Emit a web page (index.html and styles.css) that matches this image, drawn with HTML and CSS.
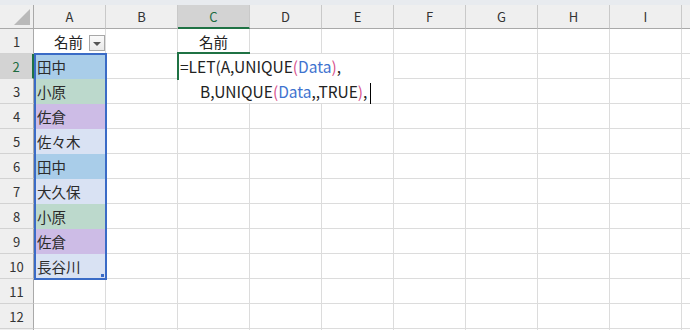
FILE: index.html
```html
<!DOCTYPE html>
<html lang="ja">
<head>
<meta charset="utf-8">
<link rel="stylesheet" href="styles.css">
</head>
<body>
<div class="sheet">
  <div class="strip"></div>
  <div class="grid">
    <div class="corner"><span class="tri"></span></div>
    <div class="ch">A</div><div class="ch">B</div><div class="ch sel">C</div><div class="ch">D</div><div class="ch">E</div><div class="ch">F</div><div class="ch">G</div><div class="ch">H</div><div class="ch">I</div><div class="ch last"></div>

    <div class="rh">1</div><div class="c hd"><span>名前</span><span class="dd"><span class="arrow"></span></span></div><div class="c"></div><div class="c ctr">名前</div><div class="c"></div><div class="c"></div><div class="c"></div><div class="c"></div><div class="c"></div><div class="c"></div><div class="c"></div>

    <div class="rh rsel">2</div><div class="c n blue">田中</div><div class="c"></div><div class="c"></div><div class="c"></div><div class="c"></div><div class="c"></div><div class="c"></div><div class="c"></div><div class="c"></div><div class="c"></div>

    <div class="rh">3</div><div class="c n green">小原</div><div class="c"></div><div class="c"></div><div class="c"></div><div class="c"></div><div class="c"></div><div class="c"></div><div class="c"></div><div class="c"></div><div class="c"></div>

    <div class="rh">4</div><div class="c n purple">佐倉</div><div class="c"></div><div class="c"></div><div class="c"></div><div class="c"></div><div class="c"></div><div class="c"></div><div class="c"></div><div class="c"></div><div class="c"></div>

    <div class="rh">5</div><div class="c n light">佐々木</div><div class="c"></div><div class="c"></div><div class="c"></div><div class="c"></div><div class="c"></div><div class="c"></div><div class="c"></div><div class="c"></div><div class="c"></div>

    <div class="rh">6</div><div class="c n blue">田中</div><div class="c"></div><div class="c"></div><div class="c"></div><div class="c"></div><div class="c"></div><div class="c"></div><div class="c"></div><div class="c"></div><div class="c"></div>

    <div class="rh">7</div><div class="c n light">大久保</div><div class="c"></div><div class="c"></div><div class="c"></div><div class="c"></div><div class="c"></div><div class="c"></div><div class="c"></div><div class="c"></div><div class="c"></div>

    <div class="rh">8</div><div class="c n green">小原</div><div class="c"></div><div class="c"></div><div class="c"></div><div class="c"></div><div class="c"></div><div class="c"></div><div class="c"></div><div class="c"></div><div class="c"></div>

    <div class="rh">9</div><div class="c n purple">佐倉</div><div class="c"></div><div class="c"></div><div class="c"></div><div class="c"></div><div class="c"></div><div class="c"></div><div class="c"></div><div class="c"></div><div class="c"></div>

    <div class="rh">10</div><div class="c n light">長谷川</div><div class="c"></div><div class="c"></div><div class="c"></div><div class="c"></div><div class="c"></div><div class="c"></div><div class="c"></div><div class="c"></div><div class="c"></div>

    <div class="rh">11</div><div class="c"></div><div class="c"></div><div class="c"></div><div class="c"></div><div class="c"></div><div class="c"></div><div class="c"></div><div class="c"></div><div class="c"></div><div class="c"></div>

    <div class="rh">12</div><div class="c"></div><div class="c"></div><div class="c"></div><div class="c"></div><div class="c"></div><div class="c"></div><div class="c"></div><div class="c"></div><div class="c"></div><div class="c"></div>

    <div class="rh"></div><div class="c"></div><div class="c"></div><div class="c"></div><div class="c"></div><div class="c"></div><div class="c"></div><div class="c"></div><div class="c"></div><div class="c"></div><div class="c"></div>
  </div>

  <div class="range"><span class="handle"></span></div>
  <div class="active"></div>
  <div class="editor">
    <div class="line">=LET(A,UNIQUE<span class="p">(</span><span class="ref">Data</span><span class="p">)</span>,</div>
    <div class="line indent">B,UNIQUE<span class="p">(</span><span class="ref">Data</span>,,TRUE<span class="p">)</span>,<span class="caret"></span></div>
  </div>
</div>
</body>
</html>
```

FILE: styles.css
```css
* { box-sizing: border-box; }
html, body { margin: 0; padding: 0; background: #ffffff; overflow: hidden; }
body {
  width: 690px;
  height: 330px;
  font-family: "Noto Sans CJK JP", "Noto Sans", sans-serif;
  color: #222222;
}
.sheet { position: relative; width: 690px; height: 330px; overflow: hidden; }
.strip { height: 5px; background: #e8ebef; }

.grid {
  display: grid;
  grid-template-columns: 34px repeat(9, 72px) 20px;
  grid-template-rows: 24px repeat(13, 25px);
}

.corner {
  position: relative;
  background: #efefef;
  border-right: 1px solid #a9a9a9;
  border-bottom: 1px solid #a9a9a9;
}
.tri {
  position: absolute;
  right: 3px;
  bottom: 3px;
  width: 0;
  height: 0;
  border-left: 16px solid transparent;
  border-bottom: 16px solid #b9b9b9;
}

.ch {
  background: #efefef;
  border-right: 1px solid #c9c9c9;
  border-bottom: 1px solid #a9a9a9;
  font-size: 13px;
  color: #333333;
  display: flex;
  align-items: center;
  justify-content: center;
}
.ch.sel {
  background: #d3d3d3;
  color: #1d6b3f;
  border-bottom: 2px solid #1f7244;
}
.ch.last { border-right: none; }

.rh {
  background: #efefef;
  border-right: 1px solid #a9a9a9;
  border-bottom: 1px solid #d2d2d2;
  font-size: 13px;
  color: #333333;
  display: flex;
  align-items: center;
  justify-content: center;
}
.rh.rsel {
  background: #d3d3d3;
  color: #1d6b3f;
  border-right: 2px solid #1f7244;
}

.c {
  border-right: 1px solid #dcdcdc;
  border-bottom: 1px solid #dcdcdc;
  font-size: 14.5px;
  display: flex;
  align-items: center;
}
.c.ctr { justify-content: center; }
.c.hd { justify-content: center; position: relative; padding-right: 2px; }
.dd {
  position: absolute;
  left: 55px;
  top: 6px;
  width: 16px;
  height: 16px;
  border: 1px solid #a8a8a8;
  background: linear-gradient(#fafafa, #e9e9e9);
  display: flex;
  align-items: center;
  justify-content: center;
}
.arrow {
  width: 0;
  height: 0;
  border-left: 4px solid transparent;
  border-right: 4px solid transparent;
  border-top: 4px solid #555555;
  margin-top: 1px;
}
.c.n { padding-left: 3px; color: #2b2b2b; }
.blue { background: #a9cde9; border-bottom-color: #a9cde9; }
.green { background: #bcd9cc; border-bottom-color: #bcd9cc; }
.purple { background: #cdbce6; border-bottom-color: #cdbce6; }
.light { background: #d9e2f3; border-bottom-color: #d9e2f3; }

.range {
  position: absolute;
  left: 34px;
  top: 53px;
  width: 73px;
  height: 227px;
  border: 2px solid #3a6bc6;
}
.handle {
  position: absolute;
  right: 1px;
  bottom: 1px;
  width: 3px;
  height: 3px;
  background: #3a6bc6;
}

.active {
  position: absolute;
  left: 177px;
  top: 52px;
  width: 73px;
  height: 28px;
  border-top: 2px solid #1f7244;
  border-left: 2px solid #1f7244;
}

.editor {
  position: absolute;
  left: 179px;
  top: 54px;
  width: 214px;
  height: 49px;
  background: #ffffff;
  font-size: 15.5px;
  color: #222222;
}
.line {
  height: 25px;
  line-height: 25px;
  padding-left: 1px;
  white-space: nowrap;
}
.line.indent { padding-left: 21px; }
.p { color: #d8508c; }
.ref { color: #3f73cf; }
.caret {
  display: inline-block;
  width: 1px;
  height: 21px;
  background: #000000;
  vertical-align: middle;
  margin-left: 3px;
}
```
